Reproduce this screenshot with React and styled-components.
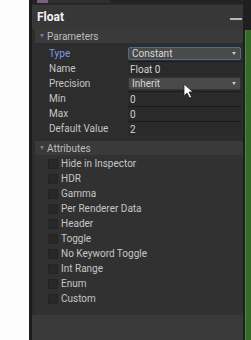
import React from 'react';
import styled, { createGlobalStyle } from 'styled-components';

const GlobalStyle = createGlobalStyle`
  html, body {
    margin: 0;
    padding: 0;
    background: #fdfdfd;
    font-family: Roboto, "Liberation Sans", Arial, sans-serif;
  }
`;

const Page = styled.div`
  position: relative;
  display: flex;
  width: 251px;
  height: 340px;
  overflow: hidden;
  padding-left: 29px;
  box-sizing: border-box;
`;

const Inspector = styled.div`
  width: 214px;
  display: flex;
  flex-direction: column;
  background: #2f2f2f;
  border-left: 3px solid #1d1d1d;
  box-sizing: border-box;
`;

const TopBar = styled.div`
  height: 5px;
  display: flex;
  background: #232323;
  border-bottom: 1px solid #2b2b2b;
  box-sizing: border-box;
`;

const Tab = styled.div`
  height: 3px;
  width: ${({ w }) => w}px;
  margin-left: ${({ ml }) => ml || 0}px;
  background: ${({ color }) => color};
`;

const Header = styled.div`
  height: 24px;
  display: flex;
  align-items: center;
  justify-content: space-between;
  padding: 0 1px 0 5px;
  background: #373737;
  color: #f2f2f2;
  font-weight: 700;
  font-size: 12px;
`;

const Minus = styled.div`
  width: 12px;
  height: 2px;
  background: #b8b8b8;
  margin-top: 4px;
`;

const Body = styled.div`
  padding-left: 3px;
  display: flex;
  flex-direction: column;
  background: #2d2d2d;
`;

const SectionHeader = styled.div`
  height: 14px;
  display: flex;
  align-items: center;
  gap: 3px;
  padding-left: 5px;
  background: #3a3a3a;
  color: #bdbdbd;
  font-size: 10px;
  margin-top: ${({ mt }) => mt || 0}px;
`;

const Arrow = styled.span`
  width: 0;
  height: 0;
  border-left: 2.5px solid transparent;
  border-right: 2.5px solid transparent;
  border-top: 4px solid #7a7a7a;
`;

const Rows = styled.div`
  display: flex;
  flex-direction: column;
  padding: ${({ pad }) => pad};
  background: ${({ bg }) => bg || 'transparent'};
`;

const Row = styled.div`
  height: 15px;
  display: flex;
  align-items: center;
  padding-left: 14px;
  padding-right: 2px;
  font-size: 10px;
  color: #c6c6c6;
`;

const Label = styled.div`
  width: 79px;
  color: ${({ active }) => (active ? '#7d9be0' : '#c6c6c6')};
`;

const Dropdown = styled.div`
  width: 113px;
  height: 13px;
  box-sizing: border-box;
  display: flex;
  align-items: center;
  justify-content: space-between;
  padding: 0 4px 0 3px;
  background: #4a4a4a;
  border: 1px solid ${({ focus }) => (focus ? '#4e6b8c' : '#323232')};
  border-radius: 2px;
  color: #d6d6d6;
`;

const Caret = styled.span`
  width: 0;
  height: 0;
  border-left: 2.5px solid transparent;
  border-right: 2.5px solid transparent;
  border-top: 3.5px solid #c8c8c8;
`;

const Field = styled.div`
  width: 113px;
  height: 15px;
  box-sizing: border-box;
  display: flex;
  align-items: center;
  padding-left: 2px;
  background: #2a2a2a;
  border-top: 1px solid #1b1b1b;
  color: #d2d2d2;
`;

const CheckRow = styled.div`
  height: 15px;
  display: flex;
  align-items: center;
  gap: 3px;
  padding-left: 13px;
  font-size: 10px;
  color: #c6c6c6;
`;

const Box = styled.span`
  width: 10px;
  height: 10px;
  box-sizing: border-box;
  background: #282828;
  border: 1px solid #232323;
  border-radius: 1px;
`;

const Footer = styled.div`
  flex: 1;
  background: #3a3a3a;
`;

const RightEdge = styled.div`
  width: 8px;
  display: flex;
  flex-direction: column;
  background: #1f1f1f;
`;

const Green = styled.div`
  flex: 1;
  margin-top: 30px;
  margin-left: 2px;
  background: #356a2b;
  border-left: 1px solid #4e8a3e;
`;

const Cursor = styled.svg`
  position: absolute;
  left: 183px;
  top: 83px;
`;

const params = [
  { label: 'Type', kind: 'dropdown', value: 'Constant', focus: true },
  { label: 'Name', kind: 'field', value: 'Float 0' },
  { label: 'Precision', kind: 'dropdown', value: 'Inherit' },
  { label: 'Min', kind: 'field', value: '0' },
  { label: 'Max', kind: 'field', value: '0' },
  { label: 'Default Value', kind: 'field', value: '2' },
];

const attributes = [
  'Hide in Inspector',
  'HDR',
  'Gamma',
  'Per Renderer Data',
  'Header',
  'Toggle',
  'No Keyword Toggle',
  'Int Range',
  'Enum',
  'Custom',
];

export default function App() {
  return (
    <>
      <GlobalStyle />
      <Page>
        <Inspector>
          <TopBar>
            <Tab w={11} ml={5} color="#7b5f80" />
            <Tab w={62} color="#2f2f2f" />
          </TopBar>
          <Header>
            Float
            <Minus />
          </Header>
          <Body>
            <SectionHeader>
              <Arrow />
              Parameters
            </SectionHeader>
            <Rows pad="3px 0 0">
              {params.map((p) => (
                <Row key={p.label}>
                  <Label active={p.focus}>{p.label}</Label>
                  {p.kind === 'dropdown' ? (
                    <Dropdown focus={p.focus}>
                      {p.value}
                      <Caret />
                    </Dropdown>
                  ) : (
                    <Field>{p.value}</Field>
                  )}
                </Row>
              ))}
            </Rows>
            <SectionHeader mt={5}>
              <Arrow />
              Attributes
            </SectionHeader>
            <Rows pad="1px 0 9px" bg="#313131">
              {attributes.map((a) => (
                <CheckRow key={a}>
                  <Box />
                  {a}
                </CheckRow>
              ))}
            </Rows>
          </Body>
          <Footer />
        </Inspector>
        <RightEdge>
          <Green />
        </RightEdge>
        <Cursor width="11" height="16" viewBox="0 0 11 16">
          <path d="M1 1 L1 13 L4 10 L6.5 15 L8.5 14 L6 9 L10 9 Z" fill="#fff" stroke="#222" strokeWidth="0.8" />
        </Cursor>
      </Page>
    </>
  );
}
